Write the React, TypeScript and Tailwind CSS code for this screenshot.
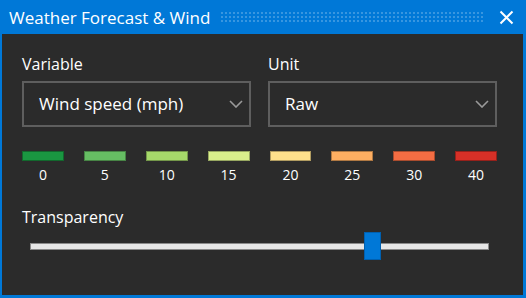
import React from "react";

const colors = [
  ["#1a9641", "0"],
  ["#66bd63", "5"],
  ["#a6d96a", "10"],
  ["#d9ef8b", "15"],
  ["#fee08b", "20"],
  ["#fdae61", "25"],
  ["#f46d43", "30"],
  ["#d73027", "40"],
];

function Chevron() {
  return (
    <svg width="14" height="8" viewBox="0 0 14 8" className="shrink-0">
      <path d="M1 1 L7 7 L13 1" fill="none" stroke="#9a9a9a" strokeWidth="1.6" />
    </svg>
  );
}

function Select({ value }: { value: string }) {
  return (
    <div className="h-[46px] border-2 border-[#5e5e5e] flex items-center justify-between pl-[15px] pr-[6px] text-[17px] text-white">
      <span>{value}</span>
      <Chevron />
    </div>
  );
}

export default function App() {
  return (
    <div className="w-[526px] h-[298px] flex flex-col font-['Open_Sans','Noto_Sans',sans-serif] select-none">
      <div className="h-[34px] bg-[#0078d7] flex items-center pl-[9px] pr-[12px] shrink-0">
        <span className="text-white text-[17px] leading-none whitespace-nowrap">Weather Forecast &amp; Wind</span>
        <div className="flex-1 mx-[10px] h-[12px] bg-[radial-gradient(circle,rgba(255,255,255,0.22)_0.8px,transparent_1px)] bg-[length:4px_4px]" />
        <svg width="15" height="15" viewBox="0 0 15 15" className="ml-[4px]">
          <path d="M1.5 1.5 L13.5 13.5 M13.5 1.5 L1.5 13.5" stroke="white" strokeWidth="2" />
        </svg>
      </div>
      <div className="flex-1 bg-[#2b2b2b] border-l-2 border-r-[3px] border-b-[3px] border-[#0078d7] pl-[20px] pr-[26px] pt-[20px]">
        <div className="grid grid-cols-2 gap-[17px]">
          <div>
            <div className="text-white text-[16px] leading-[20px] mb-[7px]">Variable</div>
            <Select value="Wind speed (mph)" />
          </div>
          <div>
            <div className="text-white text-[16px] leading-[20px] mb-[7px]">Unit</div>
            <Select value="Raw" />
          </div>
        </div>
        <div className="grid grid-cols-8 gap-[20px] mt-[24px]">
          {colors.map(([c, l]) => (
            <div key={l} className="flex flex-col items-center">
              <div className="w-full h-[10px] border border-black/30" style={{ backgroundColor: c }} />
              <div className="text-white text-[14px] leading-[18px] mt-[5px]">{l}</div>
            </div>
          ))}
        </div>
        <div className="text-white text-[16px] leading-[20px] mt-[23px]">Transparency</div>
        <div className="relative h-[28px] mt-[5px] mx-[8px] flex items-center">
          <div className="w-full h-[7px] bg-[#e6e6e6] border border-[#8a8a8a]" />
          <div className="absolute left-[334px] top-0 w-[17px] h-[28px] bg-[#0078d7] border border-[#0060b0]" />
        </div>
      </div>
    </div>
  );
}
